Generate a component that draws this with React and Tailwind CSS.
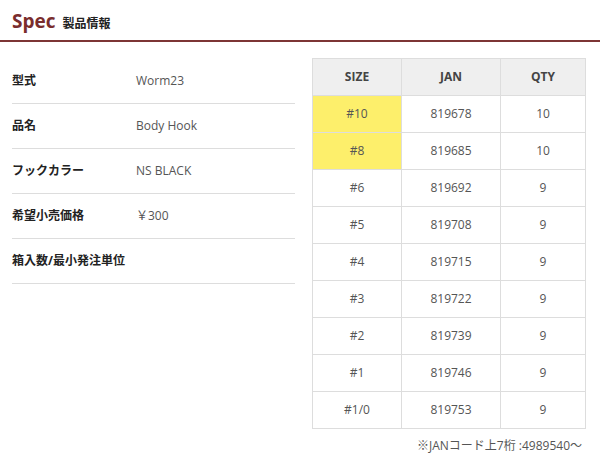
const specs = [
  { label: '型式', value: 'Worm23' },
  { label: '品名', value: 'Body Hook' },
  { label: 'フックカラー', value: 'NS BLACK' },
  { label: '希望小売価格', value: '￥300' },
  { label: '箱入数/最小発注単位', value: '' },
];

const sizes = [
  { size: '#10', jan: '819678', qty: '10', hl: true },
  { size: '#8', jan: '819685', qty: '10', hl: true },
  { size: '#6', jan: '819692', qty: '9' },
  { size: '#5', jan: '819708', qty: '9' },
  { size: '#4', jan: '819715', qty: '9' },
  { size: '#3', jan: '819722', qty: '9' },
  { size: '#2', jan: '819739', qty: '9' },
  { size: '#1', jan: '819746', qty: '9' },
  { size: '#1/0', jan: '819753', qty: '9' },
];

export default function App() {
  return (
    <div className="w-[600px] h-[459px] bg-white overflow-hidden font-['Open_Sans','Noto_Sans_CJK_JP',sans-serif] text-[#333]">
      {/* タイトル */}
      <div className="pl-[12px] pt-[8px] h-[42px] border-b-2 border-[#7d3535] flex items-baseline gap-[7px]">
        <span className="text-[19px] font-bold text-[#7a2d2d] leading-[26px]">Spec</span>
        <span className="text-[12px] font-bold text-[#222]">製品情報</span>
      </div>

      <div className="flex pl-[12px] pt-[16px]">
        {/* 製品スペック */}
        <div className="w-[283px] mt-[1px]">
          {specs.map((s) => (
            <div key={s.label} className="h-[45px] flex items-center border-b border-[#ddd] text-[12px]">
              <span className="w-[124px] font-bold text-[#222]">{s.label}</span>
              <span className="text-[#555]">{s.value}</span>
            </div>
          ))}
        </div>

        {/* サイズ表 */}
        <div className="ml-[17px] w-[274px]">
          <table className="w-full border-collapse text-[12px] text-center">
            <thead>
              <tr className="h-[37px] bg-[#efefef]">
                <th className="w-[89px] border border-[#ddd] font-bold text-[#444]">SIZE</th>
                <th className="w-[99px] border border-[#ddd] font-bold text-[#444]">JAN</th>
                <th className="border border-[#ddd] font-bold text-[#444]">QTY</th>
              </tr>
            </thead>
            <tbody>
              {sizes.map((r) => (
                <tr key={r.size} className="h-[37px] text-[#555]">
                  <td className={r.hl ? 'border border-[#ddd] bg-[#fdef6b]' : 'border border-[#ddd]'}>{r.size}</td>
                  <td className="border border-[#ddd]">{r.jan}</td>
                  <td className="border border-[#ddd]">{r.qty}</td>
                </tr>
              ))}
            </tbody>
          </table>
          <p className="text-right pr-[4px] mt-[8px] text-[12px] text-[#555]">※JANコード上7桁 :4989540～</p>
        </div>
      </div>
    </div>
  );
}
